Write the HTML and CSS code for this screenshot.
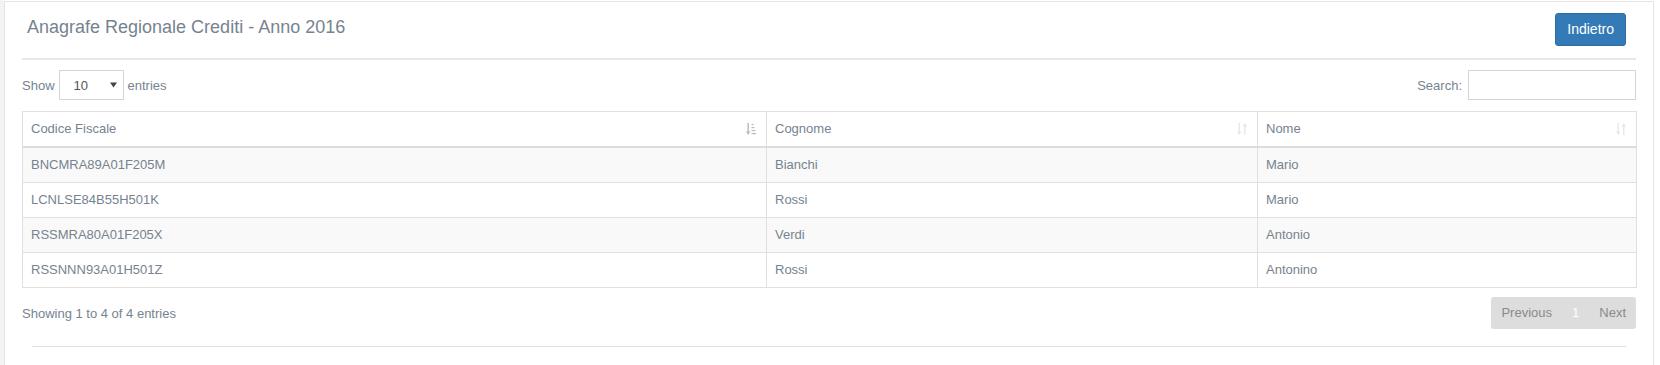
FILE: index.html
```html
<!DOCTYPE html>
<html lang="it">
<head>
    <meta charset="UTF-8">
    <meta name="viewport" content="width=device-width, initial-scale=1.0">
    <title>Anagrafe Regionale Crediti</title>
    <link rel="stylesheet" href="styles.css">
</head>
<body>

<div class="edge"></div>

<!-- Pannello anagrafe -->
<main class="panel">
    <div class="panel-head">
        <h3 class="panel-title">Anagrafe Regionale Crediti - Anno 2016</h3>
        <button class="btn-back">Indietro</button>
    </div>
    <hr class="head-rule">

    <div class="dt-top">
        <label class="dt-length">Show
            <span class="select-wrap">
                <select>
                    <option>10</option>
                    <option>25</option>
                    <option>50</option>
                    <option>100</option>
                </select>
                <svg class="caret" width="7" height="6" viewBox="0 0 7 6"><path d="M0 0.5h7L3.5 5.5z" fill="#444"/></svg>
            </span>
            entries</label>
        <label class="dt-search">Search: <input type="search"></label>
    </div>

    <table class="dt">
        <colgroup>
            <col class="col-cf">
            <col class="col-cognome">
            <col class="col-nome">
        </colgroup>
        <thead>
            <tr>
                <th class="sorted">Codice Fiscale
                    <svg class="sort-icon" width="10" height="12" viewBox="0 0 10 12">
                        <path d="M1.5 0h1.4v8.5h1.5L2.2 12 0 8.5h1.5z" fill="currentColor"/>
                        <rect x="5.5" y="1" width="2" height="1.2" fill="currentColor"/>
                        <rect x="5.5" y="4" width="3" height="1.2" fill="currentColor"/>
                        <rect x="5.5" y="7" width="3.8" height="1.2" fill="currentColor"/>
                        <rect x="5.5" y="10" width="4.5" height="1.2" fill="currentColor"/>
                    </svg>
                </th>
                <th>Cognome
                    <svg class="sort-icon" width="10" height="12" viewBox="0 0 10 12">
                        <path d="M1.5 0h1.4v8.5h1.5L2.2 12 0 8.5h1.5z" fill="currentColor"/>
                        <path d="M7.1 12h1.4V3.5H10L7.8 0 5.6 3.5h1.5z" fill="currentColor"/>
                    </svg>
                </th>
                <th>Nome
                    <svg class="sort-icon" width="10" height="12" viewBox="0 0 10 12">
                        <path d="M1.5 0h1.4v8.5h1.5L2.2 12 0 8.5h1.5z" fill="currentColor"/>
                        <path d="M7.1 12h1.4V3.5H10L7.8 0 5.6 3.5h1.5z" fill="currentColor"/>
                    </svg>
                </th>
            </tr>
        </thead>
        <tbody>
            <tr><td>BNCMRA89A01F205M</td><td>Bianchi</td><td>Mario</td></tr>
            <tr><td>LCNLSE84B55H501K</td><td>Rossi</td><td>Mario</td></tr>
            <tr><td>RSSMRA80A01F205X</td><td>Verdi</td><td>Antonio</td></tr>
            <tr><td>RSSNNN93A01H501Z</td><td>Rossi</td><td>Antonino</td></tr>
        </tbody>
    </table>

    <div class="dt-bottom">
        <div class="dt-info">Showing 1 to 4 of 4 entries</div>
        <ul class="pager">
            <li class="disabled">Previous</li>
            <li class="active">1</li>
            <li class="disabled">Next</li>
        </ul>
    </div>

    <hr class="foot-rule">
</main>

</body>
</html>
```

FILE: styles.css
```css
body {
    margin: 0;
    padding: 0;
    display: flex;
    align-items: flex-start;
    background-color: #fff;
    font-family: "Liberation Sans", Arial, sans-serif;
    font-size: 13px;
    color: #76838f;
}

/* striscia grigia a sinistra */
.edge {
    width: 4px;
    min-height: 100vh;
    align-self: stretch;
    background-color: #f3f3f3;
}

.panel {
    box-sizing: border-box;
    width: 1650px;
    margin-top: 1px;
    padding: 0 17px 20px;
    border: 1px solid #e4e4e4;
    background-color: #fff;
}

.panel-head {
    display: flex;
    justify-content: space-between;
    align-items: flex-start;
    padding-top: 11px;
}

.panel-title {
    margin: 4px 0 0 5px;
    font-size: 18px;
    font-weight: normal;
    line-height: 20px;
    color: #76838f;
}

.btn-back {
    margin-right: 10px;
    padding: 6px 11px;
    font-family: inherit;
    font-size: 14px;
    line-height: 19px;
    color: #fff;
    background-color: #337ab7;
    border: 1px solid #2e6da4;
    border-radius: 3px;
    cursor: pointer;
}

.head-rule {
    height: 2px;
    margin: 12px 0 0;
    border: 0;
    background-color: #e4eaec;
}

.dt-top {
    display: flex;
    justify-content: space-between;
    align-items: center;
    margin-top: 10px;
    height: 30px;
}

.dt-length,
.dt-search {
    display: flex;
    align-items: center;
    gap: 4px;
}

.dt-search {
    gap: 6px;
}

.select-wrap {
    position: relative;
    display: inline-block;
}

.select-wrap select {
    -webkit-appearance: none;
    appearance: none;
    box-sizing: border-box;
    width: 65px;
    height: 30px;
    padding: 0 0 0 14px;
    font-family: inherit;
    font-size: 13px;
    color: #555;
    background-color: #fff;
    border: 1px solid #d5d5d5;
    border-radius: 0;
}

.caret {
    position: absolute;
    right: 7px;
    top: 12px;
    pointer-events: none;
}

.dt-search input {
    box-sizing: border-box;
    width: 168px;
    height: 30px;
    padding: 4px 8px;
    border: 1px solid #d5d5d5;
    border-radius: 0;
    font-family: inherit;
    font-size: 13px;
}

.dt {
    width: 100%;
    margin-top: 11px;
    border-collapse: collapse;
    table-layout: fixed;
    border: 1px solid #e0e0e0;
}

.col-cf { width: 744px; }
.col-cognome { width: 491px; }
.col-nome { width: 379px; }

.dt th,
.dt td {
    padding: 8px;
    line-height: 18px;
    text-align: left;
    border: 1px solid #e0e0e0;
}

.dt th {
    position: relative;
    font-weight: normal;
    border-bottom: 2px solid #dcdcdc;
}

.dt tbody tr:nth-child(odd) {
    background-color: #f9f9f9;
}

.sort-icon {
    position: absolute;
    right: 10px;
    top: 11px;
    color: #e4e8ec;
}

.sorted .sort-icon {
    color: #b3bcc4;
}

.dt-bottom {
    display: flex;
    justify-content: space-between;
    align-items: center;
    margin-top: 9px;
}

.pager {
    display: flex;
    margin: 0;
    padding: 0;
    list-style: none;
    background-color: #dddddd;
    border-radius: 3px;
}

.pager li {
    padding: 7px 10px;
    line-height: 18px;
    color: #8a8a8a;
}

.pager li.active {
    color: #fff;
}

.foot-rule {
    margin: 17px 10px 0;
    border: 0;
    border-top: 1px solid #e0e0e0;
}
```
